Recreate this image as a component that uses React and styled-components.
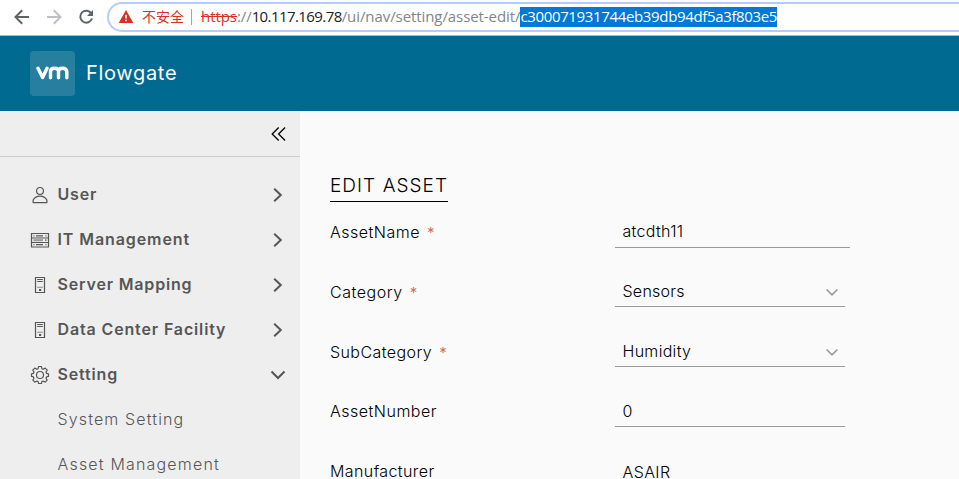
import React from 'react';
import styled, { createGlobalStyle } from 'styled-components';

const GlobalStyle = createGlobalStyle`
  * { box-sizing: border-box; }
  body { margin: 0; overflow: hidden; font-family: Inter, "Open Sans", sans-serif; }
  svg { display: block; flex: none; }
`;

const Page = styled.div`
  width: 959px;
  height: 479px;
  display: flex;
  flex-direction: column;
  overflow: hidden;
  background: #fafafa;
`;

const BrowserBar = styled.div`
  flex: none;
  height: 36px;
  display: flex;
  align-items: flex-start;
  background: #fff;
  border-bottom: 1px solid #b4b9bd;
`;

const BrowserButtons = styled.div`
  width: 107px;
  height: 34px;
  padding-left: 12px;
  display: flex;
  align-items: center;
  gap: 12px;
`;

const AddressBar = styled.div`
  flex: 1;
  height: 30px;
  margin-top: 2px;
  padding-left: 9px;
  display: flex;
  align-items: center;
  border: 2px solid #b3cdfb;
  border-right: 0;
  border-radius: 15px 0 0 15px;
  font: 15px/20px "Open Sans", "Noto Sans", sans-serif;
  white-space: nowrap;
`;

const Warning = styled.span`
  margin: -2px 0 0 8px;
  color: #d93025;
  font: 14px/20px "Noto Sans CJK SC", sans-serif;
`;

const Separator = styled.span`
  width: 1px;
  height: 16px;
  margin: 0 9px 0 7px;
  background: #a4a7ab;
`;

const UrlPart = styled.span`
  height: 20px;
  line-height: 18px;
  color: ${(p) => p.$color};
  text-decoration: ${(p) => (p.$strike ? 'line-through' : 'none')};
  letter-spacing: ${(p) => p.$track}px;
`;

const UrlSelection = styled(UrlPart)`
  background: #0078d7;
`;

const Header = styled.header`
  flex: none;
  height: 75px;
  padding-left: 30px;
  display: flex;
  align-items: center;
  gap: 11px;
  background: #006a91;
`;

const Logo = styled.div`
  width: 45px;
  height: 45px;
  margin-top: -1px;
  display: grid;
  place-items: center;
  border-radius: 4px;
  background: #267f9f;
`;

const Brand = styled.span`
  margin-top: -2px;
  color: #fafafa;
  font-size: 20px;
  line-height: 24px;
  letter-spacing: ${(p) => p.$track}px;
`;

const Body = styled.div`
  flex: 1;
  min-height: 0;
  display: flex;
`;

const Sidebar = styled.nav`
  flex: none;
  width: 300px;
  background: #eee;
  overflow: hidden;
`;

const CollapseBar = styled.div`
  height: 46px;
  padding-right: 14px;
  display: flex;
  align-items: center;
  justify-content: flex-end;
  border-bottom: 1px solid #ccc;
`;

const NavList = styled.div`
  padding-top: 15px;
`;

const NavItem = styled.div`
  height: 45px;
  padding: 0 11px 0 30px;
  display: flex;
  align-items: center;
  color: #565656;
`;

const NavLabel = styled.span`
  flex: 1;
  margin: -2px 0 0 7.5px;
  font-size: 16px;
  font-weight: 600;
  line-height: 24px;
  letter-spacing: ${(p) => p.$track}px;
  white-space: nowrap;
`;

const SubItem = styled.div`
  height: 45px;
  padding-left: 57.5px;
  color: #565656;
  font-size: 16px;
  font-weight: 300;
  line-height: 45px;
  letter-spacing: ${(p) => p.$track}px;
  white-space: nowrap;
`;

const Content = styled.main`
  flex: 1;
  padding: 62px 0 0 30px;
  color: #000;
`;

const Title = styled.h1`
  width: 118px;
  height: 29px;
  margin: 0;
  border-bottom: 1px solid #000;
  font-size: 19px;
  font-weight: 300;
  line-height: 25px;
  letter-spacing: ${(p) => p.$track}px;
  white-space: nowrap;
`;

const FieldRow = styled.div`
  height: 60px;
  display: grid;
  grid-template-columns: 285px 1fr;

  &:last-child {
    height: 46px;
  }
`;

const FieldLabel = styled.label`
  padding-top: ${(p) => p.$top}px;
  font-size: 16px;
  font-weight: 300;
  line-height: 24px;
  letter-spacing: ${(p) => p.$track}px;
`;

const Required = styled.span`
  margin-left: 7px;
  color: #d0705c;
  font-size: 15px;
  font-weight: 400;
  line-height: 20px;
  letter-spacing: 0;
`;

const Field = styled.div`
  width: ${(p) => p.$width}px;
  height: ${(p) => p.$height}px;
  padding: 0 7px ${(p) => p.$bottom}px 7.5px;
  display: flex;
  align-items: flex-end;
  justify-content: space-between;
  border-bottom: 1px solid #9a9a9a;
  font-size: 16px;
  font-weight: 300;
  line-height: 24px;
  letter-spacing: ${(p) => p.$track}px;

  svg {
    margin-bottom: 5px;
  }
`;

const Stroke = ({ size = 20, color = 'currentColor', width = 1.3, children }) => (
  <svg width={size} height={size} viewBox={`0 0 ${size} ${size}`} fill="none" stroke={color} strokeWidth={width}>
    {children}
  </svg>
);

const UserIcon = () => (
  <Stroke width={1.2}>
    <circle cx="10" cy="5.9" r="3.4" />
    <path d="M3.1 17.600v-2.500c1.300-2.400 3.800-4 6.900-4s5.600 1.600 6.900 4v2.500z" strokeLinejoin="round" />
  </Stroke>
);

const RackIcon = () => (
  <Stroke width={1.2}>
    <path d="M1.500 3.500h17v13.500h-17zM1.500 8h17M1.500 12.500h17" />
    <path d="M3.500 5.800h1M6 5.800h7M15.500 5.800h1M3.500 14.700h1M6 14.700h7M15.500 14.700h1" />
    <path d="M3.500 10.200h9.500" stroke="#999" strokeWidth="2" />
    <path d="M15 10.200h1.500" />
  </Stroke>
);

const HostIcon = () => (
  <Stroke width={1.2}>
    <path d="M5.500 2.500h9v15h-9z" />
    <path d="M7.200 4.500h5.600M7.200 6.500h5.600" strokeWidth="1" />
    <path d="M7.200 12.300h5.600" stroke="#999" strokeWidth="1.200" />
    <path d="M9 15h2.200" strokeWidth="2" />
  </Stroke>
);

const GearIcon = () => (
  <Stroke width={1.2}>
    <circle cx="10" cy="10" r="3.5" />
    <path
      d="M8.600 1.500h2.800l.5 2.200 1.300.6 2-1.200 2 2-1.200 2 .6 1.300 1.900.4v2.600l-1.900.5-.6 1.300 1.200 2-2 2-2-1.200-1.300.6-.5 1.900H8.600l-.5-1.900-1.300-.6-2 1.200-2-2 1.200-2-.6-1.300-1.900-.5V8.800l1.900-.4.6-1.300-1.200-2 2-2 2 1.200 1.300-.6z"
      strokeLinejoin="round"
    />
  </Stroke>
);

const Caret = ({ open }) => (
  <Stroke size={22} width={2}>
    <path d={open ? 'M4.500 7.500l6.500 6.500L17.500 7.500' : 'M7.200 4.700l6.600 6.300-6.600 6.300'} />
  </Stroke>
);

const navItems = [
  { label: 'User', Icon: UserIcon, track: 0.85 },
  { label: 'IT Management', Icon: RackIcon, track: 0.91 },
  { label: 'Server Mapping', Icon: HostIcon, track: 0.83 },
  { label: 'Data Center Facility', Icon: HostIcon, track: 0.86 },
  { label: 'Setting', Icon: GearIcon, track: 0.85, open: true },
];

const subItems = [
  { label: 'System Setting', track: 1.13 },
  { label: 'Asset Management', track: 1.18 },
];

const fields = [
  { label: 'AssetName', value: 'atcdth11', required: true, width: 235, height: 46, bottom: 4, top: 18, track: 0.5, valueTrack: 0.3 },
  { label: 'Category', value: 'Sensors', required: true, select: true, width: 230, height: 45, bottom: 3, top: 18, track: 0.55, valueTrack: 0.25 },
  { label: 'SubCategory', value: 'Humidity', required: true, select: true, width: 230, height: 45, bottom: 3, top: 18, track: 0.42, valueTrack: 0.3 },
  { label: 'AssetNumber', value: '0', width: 230, height: 45, bottom: 3, top: 17, track: 0.5, valueTrack: 0 },
  { label: 'Manufacturer', value: 'ASAIR', width: 230, height: 45, bottom: 2, top: 17, track: 0.4, valueTrack: 0.4 },
];

export default function App() {
  return (
    <Page>
      <GlobalStyle />
      <BrowserBar>
        <BrowserButtons>
          <Stroke color="#5f6368" width={2}>
            <path d="M17 10H4M10.200 3.300L3.500 10l6.700 6.700" />
          </Stroke>
          <Stroke color="#bdc1c6" width={2}>
            <path d="M3 10h13M9.800 3.300l6.700 6.700-6.700 6.700" />
          </Stroke>
          <Stroke color="#5f6368" width={2}>
            <path d="M15.400 6.500A6 6 0 1 0 16 11.500" />
            <path d="M17 3v6h-6z" fill="#5f6368" stroke="none" />
          </Stroke>
        </BrowserButtons>
        <AddressBar>
          <svg width="16" height="16" viewBox="0 0 16 16">
            <path d="M8 1L15.300 14H.7z" fill="#d93025" />
            <path d="M7.200 5.800h1.600v3.700H7.200zM7.200 10.700h1.600v1.600H7.200z" fill="#fff" />
          </svg>
          <Warning>不安全</Warning>
          <Separator />
          <UrlPart $color="#d93025" $strike $track={-0.05}>https</UrlPart>
          <UrlPart $color="#80868b" $track={-0.1}>://</UrlPart>
          <UrlPart $color="#202124" $track={-0.58}>10.117.169.78</UrlPart>
          <UrlPart $color="#80868b" $track={-0.08}>/ui/nav/setting/asset-edit/</UrlPart>
          <UrlSelection $color="#fff" $track={-0.35}>c300071931744eb39db94df5a3f803e5</UrlSelection>
        </AddressBar>
      </BrowserBar>
      <Header>
        <Logo>
          <svg width="33" height="14" viewBox="0 0 33 14" fill="none" stroke="#fff" strokeWidth="3.400" strokeLinecap="round" strokeLinejoin="round">
            <path d="M2 2.300L6.600 11.500 11 2.300" />
            <path d="M14.500 11.800V5.500Q14.500 2.300 18.500 2.300T22.500 5.500V11.800M22.500 5.500Q22.500 2.300 26.500 2.300T30.800 5.500V11.800" />
          </svg>
        </Logo>
        <Brand $track={0.68}>Flowgate</Brand>
      </Header>
      <Body>
        <Sidebar>
          <CollapseBar>
            <Stroke size={16} color="#000" width={1.3}>
              <path d="M8.700 1.500L2.200 8l6.500 6.500M15.100 1.500L8.600 8l6.500 6.500" />
            </Stroke>
          </CollapseBar>
          <NavList>
            {navItems.map(({ label, Icon, track, open }) => (
              <NavItem key={label}>
                <Icon />
                <NavLabel $track={track}>{label}</NavLabel>
                <Caret open={open} />
              </NavItem>
            ))}
            {subItems.map(({ label, track }) => (
              <SubItem key={label} $track={track}>{label}</SubItem>
            ))}
          </NavList>
        </Sidebar>
        <Content>
          <Title $track={1.05}>EDIT ASSET</Title>
          {fields.map((f) => (
            <FieldRow key={f.label}>
              <FieldLabel $top={f.top} $track={f.track}>
                {f.label}
                {f.required && <Required>*</Required>}
              </FieldLabel>
              <Field $width={f.width} $height={f.height} $bottom={f.bottom} $track={f.valueTrack}>
                {f.value}
                {f.select && (
                  <Stroke size={12} color="#999" width={1.6}>
                    <path d="M.6 3.500L6 8.900l5.400-5.400" />
                  </Stroke>
                )}
              </Field>
            </FieldRow>
          ))}
        </Content>
      </Body>
    </Page>
  );
}
